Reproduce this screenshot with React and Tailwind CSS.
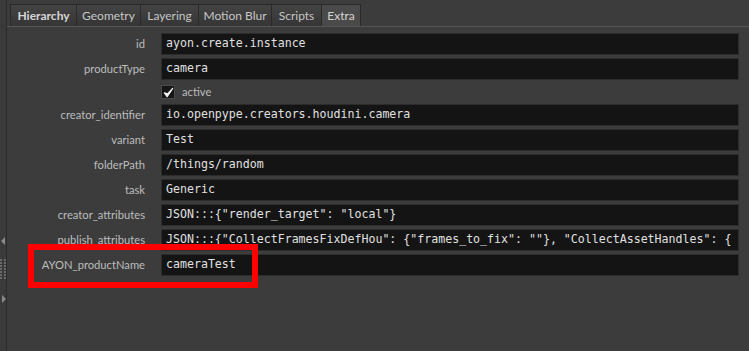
import React from 'react';

const tabs = [
  { name: 'Hierarchy', w: 'w-[66px]', active: true },
  { name: 'Geometry', w: 'w-[64px]' },
  { name: 'Layering', w: 'w-[58px]' },
  { name: 'Motion Blur', w: 'w-[73px]' },
  { name: 'Scripts', w: 'w-[50px]' },
  { name: 'Extra', w: 'w-[40px]', hover: true },
];

const rowsTop = [
  { label: 'id', value: 'ayon.create.instance' },
  { label: 'productType', value: 'camera' },
];

const rowsBottom = [
  { label: 'creator_identifier', value: 'io.openpype.creators.houdini.camera' },
  { label: 'variant', value: 'Test' },
  { label: 'folderPath', value: '/things/random' },
  { label: 'task', value: 'Generic' },
  { label: 'creator_attributes', value: 'JSON:::{"render_target": "local"}' },
  {
    label: 'publish_attributes',
    value: 'JSON:::{"CollectFramesFixDefHou": {"frames_to_fix": ""}, "CollectAssetHandles": {',
  },
  { label: 'AYON_productName', value: 'cameraTest' },
];

const sans = { fontFamily: 'Lato, "Open Sans", sans-serif' };

const Row = ({ label, value }) => (
  <div className="flex items-center h-[22px] mb-[3px]">
    <div className="w-[139px] pr-[1px] text-right text-[11.2px] text-[#bcbcbc]" style={sans}>
      {label}
    </div>
    <div className="ml-[15px] w-[578px] h-[22px] border border-[#2c2c2c] bg-[#141414] pl-[4px] flex items-center overflow-hidden">
      <span
        className="whitespace-nowrap text-[11.6px] text-[#e0e0e0]"
        style={{ fontFamily: '"DejaVu Sans Mono", monospace' }}
      >
        {value}
      </span>
    </div>
  </div>
);

const App = () => {
  return (
    <div className="relative w-[749px] h-[351px] bg-[#3c3c3c] flex overflow-hidden">
      {/* left splitter strip */}
      <div className="w-[7px] h-full bg-[#3a3a3a] border-r border-[#2a2a2a] flex flex-col items-center">
        <div className="h-[237px]" />
        <svg width="5" height="8" viewBox="0 0 5 8">
          <path d="M4 0 L0 4 L4 8 Z" fill="#8a8a8a" />
        </svg>
        <div className="h-[14px]" />
        <svg width="6" height="20" viewBox="0 0 6 20">
          {[0, 3, 6, 9, 12, 15, 18].map((y) => (
            <g key={y}>
              <rect x="0" y={y} width="2" height="2" fill="#6a6a6a" />
              <rect x="4" y={y} width="2" height="2" fill="#6a6a6a" />
            </g>
          ))}
        </svg>
        <div className="h-[16px]" />
        <svg width="5" height="8" viewBox="0 0 5 8">
          <path d="M1 0 L5 4 L1 8 Z" fill="#8a8a8a" />
        </svg>
      </div>

      <div className="flex-1 flex flex-col">
        {/* tabs */}
        <div className="h-[27px] pt-[4px] pl-[3px] border-b border-[#555555] flex">
          {tabs.map((t) => (
            <div
              key={t.name}
              className={`${t.w} h-[22px] flex items-center justify-center border-t border-l border-[#2a2a2a] last:border-r text-[12px] ${
                t.hover
                  ? 'bg-[#4a4a4a] text-[#d4d4d4]'
                  : 'bg-gradient-to-b from-[#444444] to-[#353535] text-[#c6c6c6]'
              } ${t.active ? 'font-bold text-[#d6d6d6]' : ''}`}
              style={sans}
            >
              {t.name}
            </div>
          ))}
        </div>

        <div className="pt-[6px]">
          {rowsTop.map((r) => (
            <Row key={r.label} {...r} />
          ))}
          <div className="h-[18px] mb-[3px] flex items-center pl-[154px]">
            <div className="w-[14px] h-[14px] bg-[#161616] border border-[#4a4a4a] flex items-center justify-center">
              <svg width="11" height="11" viewBox="0 0 12 12">
                <path d="M1.5 6.5 L4.5 10.5 L10.5 1.5 L5 7.5 Z" fill="#f0f0f0" stroke="#f0f0f0" strokeWidth="1.4" strokeLinejoin="round" />
              </svg>
            </div>
            <span className="ml-[7px] text-[11.2px] text-[#bcbcbc]" style={sans}>
              active
            </span>
          </div>
          {rowsBottom.map((r) => (
            <Row key={r.label} {...r} />
          ))}
        </div>
      </div>

      {/* red annotation box */}
      <div className="absolute left-[28px] top-[244px] w-[230px] h-[44px] border-[6px] border-[#ff0000]" />
    </div>
  );
};

export default App;
